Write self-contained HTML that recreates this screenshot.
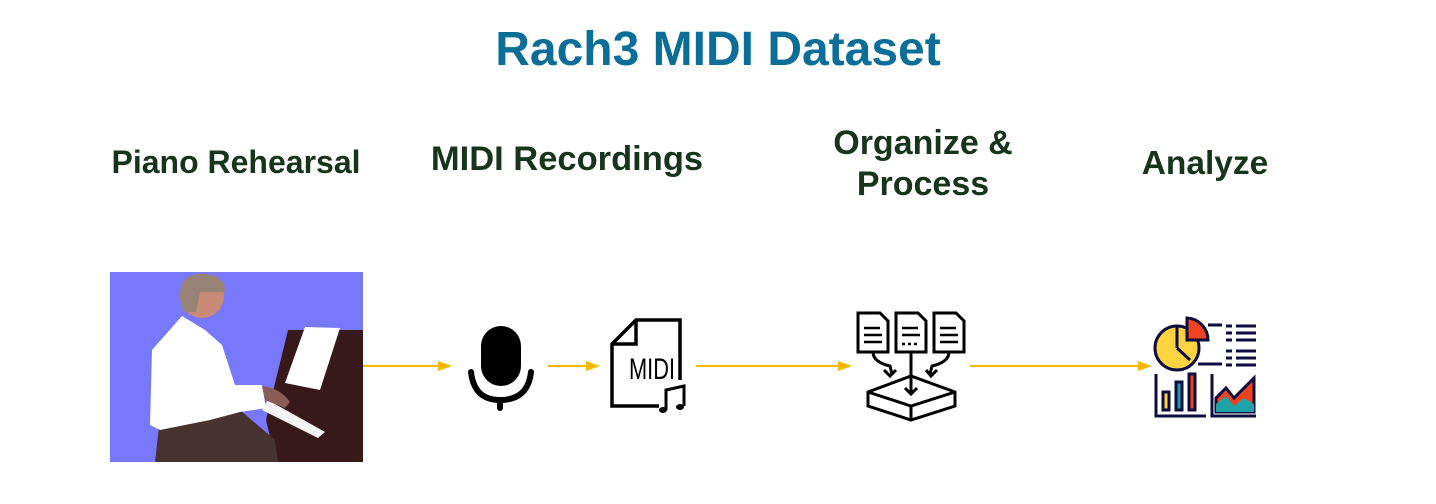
<!DOCTYPE html>
<html><head><style>
body{margin:0;width:1436px;height:504px;background:#fff;position:relative;overflow:hidden;font-family:"Liberation Sans",sans-serif}
.t{position:absolute;font-weight:bold;text-align:center;white-space:nowrap}
h1{position:absolute;margin:0;left:0;width:1436px;top:22px;text-align:center;font-size:48px;color:#0b6e99;font-weight:bold}
.l{color:#16351a;line-height:41px;transform:translateX(-50%)}
svg{position:absolute;left:0;top:0}
</style></head><body>
<h1>Rach3 MIDI Dataset</h1>
<div class="t l" style="left:236px;top:142px;font-size:32px">Piano Rehearsal</div>
<div class="t l" style="left:567px;top:139px;font-size:34.5px">MIDI Recordings</div>
<div class="t l" style="left:923px;top:123px;font-size:34px">Organize &amp;<br>Process</div>
<div class="t l" style="left:1205px;top:143px;font-size:33.5px">Analyze</div>
<svg width="1436" height="504">
<rect x="110" y="272" width="253" height="190" fill="#7878fc"/>
<polygon points="288,330 363,330 363,462 276,462 266,420" fill="#38191b"/>
<polygon points="305,327 340,328 320,390 285,383" fill="#fff"/>
<polygon points="268,400 325,432 318,438 262,410" fill="#f4f4f4"/>
<path d="M155,462 L160,418 L240,410 L275,440 L278,462Z" fill="#463330"/>
<path d="M182,316 L205,330 L222,345 L235,385 L262,385 L266,408 L240,412 L210,420 L160,430 L150,425 L152,350Z" fill="#fff"/>
<ellipse cx="202" cy="296" rx="22" ry="22" fill="#c98a76"/>
<path d="M180,300 Q178,272 205,274 Q226,276 225,292 L200,292 L196,312 L184,312Z" fill="#978276"/>
<path d="M262,386 Q280,388 290,402 L285,408 L265,400Z" fill="#8a5c55"/>
<g stroke="#f5b800" stroke-width="2"><line x1="363" y1="366" x2="440" y2="366"/><line x1="548" y1="366" x2="588" y2="366"/><line x1="696" y1="366" x2="840" y2="366"/><line x1="970" y1="366" x2="1140" y2="366"/></g>
<g fill="#f5b800"><polygon points="438,361 452,366 438,371"/><polygon points="586,361 600,366 586,371"/><polygon points="838,361 852,366 838,371"/><polygon points="1138,361 1152,366 1138,371"/></g>
<rect x="481" y="326" width="40" height="60" rx="20" fill="#000"/>
<path d="M471,372 Q474,400 500,400 Q528,400 531,372" fill="none" stroke="#000" stroke-width="6" stroke-linecap="round"/>
<line x1="500" y1="400" x2="500" y2="408" stroke="#000" stroke-width="6" stroke-linecap="round"/>
<path d="M659,406 L612,406 L612,344 L636,320 L680,320 L680,380" fill="none" stroke="#000" stroke-width="3.5"/>
<path d="M612,344 L636,344 L636,320" fill="none" stroke="#000" stroke-width="3.5"/>
<text x="629" y="379" font-size="30" font-family="Liberation Sans Narrow,Liberation Sans,sans-serif" textLength="46" lengthAdjust="spacingAndGlyphs">MIDI</text>
<path d="M666,410 L666,390 L684,386 L684,406" fill="none" stroke="#000" stroke-width="3"/>
<ellipse cx="663" cy="410" rx="4" ry="3" fill="#000"/><ellipse cx="680" cy="407" rx="4" ry="3" fill="#000"/>
<g fill="#fff" stroke="#000" stroke-width="3">
<path d="M858,313 L880,313 L888,321 L888,352 L858,352Z"/>
<path d="M896,313 L918,313 L926,321 L926,352 L896,352Z"/>
<path d="M934,313 L956,313 L964,321 L964,352 L934,352Z"/>
<path d="M868,392 L911,376 L955,392 L955,406 L911,420 L868,406Z"/>
<path d="M868,392 L911,406 L955,392 M911,406 L911,420" fill="none"/>
<path d="M873,352 Q873,362 890,366 L892,374 M911,352 L911,394 M949,352 Q949,362 932,366 L930,374" fill="none"/>
<path d="M884,370 L890,376 L896,370 M905,388 L911,394 L917,388 M926,370 L931,376 L937,370" fill="none"/>
</g>
<g stroke="#000" stroke-width="2.5"><path d="M864,328h16M864,335h18M864,342h18M902,328h16M902,335h18M940,328h16M940,335h18M940,342h18"/><path d="M902,344h18" stroke-dasharray="3 3"/></g>
<circle cx="1177" cy="348" r="22" fill="#fdd340" stroke="#0d0d40" stroke-width="3"/>
<path d="M1187,318 A22,22 0 0 1 1208,340 L1187,340Z" fill="#f0421e" stroke="#0d0d40" stroke-width="3"/>
<path d="M1177,348 L1177,326 M1177,348 L1190,360" stroke="#0d0d40" stroke-width="3"/>
<g stroke="#0d0d40" stroke-width="3" fill="none">
<path d="M1208,325h14M1198,364h24M1226,326h6M1236,326h20M1226,333h6M1236,333h20M1226,340h6M1236,340h20M1226,351h6M1236,351h20M1226,358h6M1236,358h20M1226,365h6M1236,365h20"/>
<path d="M1156,374 L1156,416 L1206,416 M1212,374 L1212,416 L1256,416"/>
<rect x="1163" y="392" width="6" height="18" fill="#fdd340"/><rect x="1176" y="382" width="6" height="28" fill="#1ba3a8"/><rect x="1189" y="374" width="6" height="36" fill="#f0421e"/>
<path d="M1216,412 L1216,398 L1226,388 L1234,398 L1254,378 L1254,412Z" fill="#f0421e"/>
<path d="M1216,412 L1216,404 L1226,396 L1234,406 L1244,398 L1254,404 L1254,412Z" fill="#1ba3a8" stroke="none"/>
</g>
</svg>
</body></html>
